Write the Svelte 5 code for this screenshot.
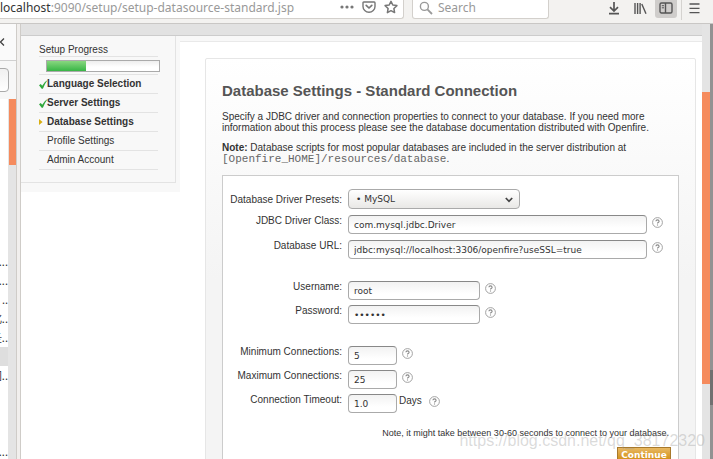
<script>
  const steps = [
    { name: 'Language Selection', state: 'done' },
    { name: 'Server Settings', state: 'done' },
    { name: 'Database Settings', state: 'current' },
    { name: 'Profile Settings', state: 'todo' },
    { name: 'Admin Account', state: 'todo' }
  ];
  const groups = [
    [
      { id: 'driver', label: 'JDBC Driver Class:', value: 'com.mysql.jdbc.Driver', size: 'wide' },
      { id: 'url', label: 'Database URL:', value: 'jdbc:mysql://localhost:3306/openfire?useSSL=true', size: 'wide' }
    ],
    [
      { id: 'username', label: 'Username:', value: 'root', size: 'medium' },
      { id: 'password', label: 'Password:', value: 'secret', size: 'medium', type: 'password' }
    ],
    [
      { id: 'min', label: 'Minimum Connections:', value: '5', size: 'small' },
      { id: 'max', label: 'Maximum Connections:', value: '25', size: 'small' },
      { id: 'timeout', label: 'Connection Timeout:', value: '1.0', size: 'small', unit: 'Days' }
    ]
  ];
  const bookmarks = ['...', '...', '..', '化..', '圣..', '', '间..', '', '', '', '...'];
</script>

{#snippet help()}
  <svg class="help" viewBox="0 0 11 11" role="img" aria-label="Help">
    <circle cx="5.5" cy="5.5" r="4.9" fill="#fff" stroke="#999" stroke-width="0.9" />
    <path d="M3.9 4.3Q4 2.9 5.5 2.9T7.1 4.2Q7.1 5 6.2 5.4Q5.5 5.7 5.5 6.5M5.5 7.4V8.4" fill="none" stroke="#888" stroke-width="1.1" />
  </svg>
{/snippet}

<div class="window">
  <header class="toolbar">
    <div class="address">
      <span class="location"><b>localhost</b>:9090/setup/setup-datasource-standard.jsp</span>
      <button aria-label="Page actions">
        <svg width="14" height="14" viewBox="0 0 14 14" fill="#777"><circle cx="2" cy="7" r="1.6" /><circle cx="7" cy="7" r="1.6" /><circle cx="12" cy="7" r="1.6" /></svg>
      </button>
      <button aria-label="Save to Pocket">
        <svg width="14" height="14" viewBox="0 0 14 14" fill="none" stroke="#777" stroke-width="1.4" stroke-linejoin="round" stroke-linecap="round"><path d="M1.8 2H12.2Q13 2 13 3V6.5A6 5.8 0 0 1 1 6.5V3Q1 2 1.8 2Z" /><path d="M4.2 5.4L7 8L9.8 5.4" stroke-width="1.7" /></svg>
      </button>
      <button aria-label="Bookmark this page">
        <svg width="14" height="14" viewBox="0 0 14 14" fill="none" stroke="#777" stroke-width="1.5" stroke-linejoin="round"><path d="M7 1.3L8.8 5L12.9 5.6L9.9 8.5L10.6 12.6L7 10.7L3.4 12.6L4.1 8.5L1.1 5.6L5.2 5Z" /></svg>
      </button>
    </div>
    <label class="search">
      <svg width="14" height="14" viewBox="0 0 14 14" fill="none" stroke="#999" stroke-width="1.4"><circle cx="5.4" cy="5.4" r="4" /><path d="M8.4 8.4L13 13" stroke-width="1.8" /></svg>
      <input type="search" placeholder="Search" aria-label="Search" />
    </label>
    <nav class="tools" aria-label="Browser tools">
      <button aria-label="Downloads">
        <svg width="12" height="14" viewBox="0 0 12 14" fill="none" stroke="#555" stroke-width="1.7"><path d="M6 1V10M2 6.2L6 10L10 6.2M1 12.6H11" /></svg>
      </button>
      <button aria-label="Library">
        <svg width="14" height="14" viewBox="0 0 14 14" fill="none" stroke="#555" stroke-width="1.4"><path d="M2 2V13M4.6 2V13M7.1 2V13M8.8 3L13 12.7" /></svg>
      </button>
      <button class="pressed" aria-label="Sidebars">
        <svg width="14" height="14" viewBox="0 0 14 14" fill="none" stroke="#555" stroke-width="1.4"><rect x="1" y="2" width="12" height="10" rx="1.5" /><path d="M6.5 2V12" /><path d="M2.8 4.7H5M2.8 6.8H5" stroke-width="1" /></svg>
      </button>
      <i class="divider"></i>
      <button aria-label="Menu">
        <svg width="11" height="12" viewBox="0 0 11 12" stroke="#555" stroke-width="1.3"><path d="M0.5 2H10.5M0.5 6.3H10.5M0.5 10.6H10.5" /></svg>
      </button>
    </nav>
  </header>

  <div class="body">
    <aside class="panel">
      <div class="panelhead">
        <svg width="6" height="8" viewBox="0 0 6 8" fill="none" stroke="#444" stroke-width="1.3"><path d="M4 0.5L0.5 4L4 7.5" /></svg>
      </div>
      <div class="panelsearch"><input aria-label="Search bookmarks" /></div>
      <div class="panelbody">
        <ul>
          {#each bookmarks as mark, i}
            <li class:selected={i === 5}><span>{mark}</span></li>
          {/each}
        </ul>
        <div class="track"><div class="thumb"></div></div>
      </div>
    </aside>
    <div class="splitter"></div>

    <div class="page">
      <div class="band"></div>
      <div class="columns">
        <div class="side">
          <nav class="steps">
            <h2>Setup Progress</h2>
            <div class="meter"><div class="progress"><div style="width: 35%"></div></div></div>
            <ul>
              {#each steps as step}
                <li class={step.state}>
                  <span class="mark">
                    {#if step.state === 'done'}
                      <svg width="9" height="9" viewBox="0 0 9 9"><path d="M0 5.2L1.8 4L3.2 5.7Q5.2 1.8 8.6 0Q5.6 4 3.9 8.8H2.7Z" fill="#2fa83c" /></svg>
                    {:else if step.state === 'current'}
                      <svg width="4" height="6" viewBox="0 0 4 6"><path d="M0 0L3.6 3L0 6Z" fill="#d8ae10" /></svg>
                    {/if}
                  </span>{step.name}
                </li>
              {/each}
            </ul>
          </nav>
        </div>

        <main>
          <section class="card">
            <h1>Database Settings - Standard Connection</h1>
            <p>Specify a JDBC driver and connection properties to connect to your database. If you need more information about this process please see the database documentation distributed with Openfire.</p>
            <p><b>Note:</b> Database scripts for most popular databases are included in the server distribution at <code>[Openfire_HOME]/resources/database</code>.</p>
            <form onsubmit={(e) => e.preventDefault()}>
              <div class="group">
                <div class="row preset">
                  <label for="preset">Database Driver Presets:</label>
                  <div class="selectbox">
                    <select id="preset"><option>• MySQL</option></select>
                    <svg width="8" height="6" viewBox="0 0 8 6" fill="none" stroke="#444" stroke-width="1.7"><path d="M0.8 1L4 4.3L7.2 1" /></svg>
                  </div>
                </div>
                {#each groups[0] as field}
                  {@render row(field)}
                {/each}
              </div>
              {#each groups.slice(1) as group}
                <div class="group">
                  {#each group as field}
                    {@render row(field)}
                  {/each}
                </div>
              {/each}
              <p class="hint">Note, it might take between 30-60 seconds to connect to your database.</p>
              <div class="actions"><button type="submit">Continue</button></div>
            </form>
          </section>
        </main>
      </div>
    </div>
    <div class="pagetrack"><div class="thumb"></div></div>
  </div>
  <div class="edge"><div></div></div>
  <div class="watermark">https://blog.csdn.net/qq_38172320</div>
</div>

{#snippet row(field)}
  <div class="row">
    <label for={field.id}>{field.label}</label>
    <input id={field.id} class={field.size} type={field.type ?? 'text'} value={field.value} />
    {#if field.unit}<span class="unit">{field.unit}</span>{/if}
    {@render help()}
  </div>
{/snippet}

<style>
  :global(body) { margin: 0; }
  * { box-sizing: border-box; }
  button { font: inherit; border: 0; padding: 0; background: none; display: flex; align-items: center; justify-content: center; }
  svg { display: block; flex: none; }
  ul { list-style: none; margin: 0; padding: 0; }

  .window { position: relative; display: flex; flex-direction: column; height: 100vh; overflow: hidden; background: #fff; color: #333; font: 10px/11px "Liberation Sans", Arial, sans-serif; }

  .toolbar { flex: none; display: flex; height: 24px; padding-bottom: 4px; background: #f3f2f0; border-bottom: 1px solid #c9c7c5; font-family: "Noto Sans", sans-serif; font-size: 12px; }
  .address { flex: 1; display: flex; gap: 8px; align-items: center; height: 19px; padding: 0 5px 4px 0; background: #fff; border: solid #d3d0cc; border-width: 0 1px 1px 0; border-radius: 0 0 3px 0; color: #999; }
  .location { flex: 1; white-space: nowrap; line-height: 15px; }
  .location b { font-weight: 400; color: #333; }
  .search { display: flex; align-items: center; gap: 5px; width: 137px; height: 19px; margin-left: 8px; padding: 0 6px 3px; background: #fff; border: solid #d3d0cc; border-width: 0 1px 1px; border-radius: 0 0 3px 3px; }
  .search input { width: 90px; border: 0; padding: 0; background: none; outline: 0; font: inherit; height: 15px; }
  .search input::placeholder { color: #999; opacity: 1; }
  .tools { display: flex; align-items: center; gap: 4px; width: 164px; height: 18px; padding: 0 11px 0 0; justify-content: flex-end; }
  .tools button { width: 22px; height: 18px; padding-bottom: 3px; }
  .tools .pressed { background: #cfcdcb; border-radius: 0 0 3px 3px; }
  .tools button:last-child { width: 16px; }
  .divider { width: 1px; height: 21px; background: #d5d3d0; }

  .body { flex: 1; display: flex; min-height: 0; padding-right: 3px; }
  .panel { flex: none; display: flex; flex-direction: column; width: 16px; background: #fff; overflow: hidden; }
  .panelhead { flex: none; height: 37px; padding-top: 14px; background: #fafafa; border-bottom: 1px solid #d0d0d0; }
  .panelsearch { flex: none; height: 38px; padding-top: 7px; background: #f7f7f7; }
  .panelsearch input { display: block; width: 29px; height: 24px; margin-left: -20px; border: 1px solid #aaa; border-radius: 4px; background: linear-gradient(#f0f0f0, #fff); }
  .panelbody { flex: 1; display: flex; }
  .panelbody ul { width: 9px; padding-top: 153px; border-right: 1px solid #e4e4e4; font: 11px/19px "Noto Sans CJK SC", sans-serif; }
  .panelbody li { display: flex; justify-content: flex-end; height: 19px; overflow: hidden; }
  .panelbody li span { flex: none; }
  .panelbody .selected { background: #dedede; }
  .track { flex: 1; background: #e4e4e4; }
  .track .thumb { height: 66px; background: #f58b5d; }
  .splitter { flex: none; width: 5px; background: #f1efed; border: solid #cfccc8; border-width: 0 1px; }

  .page { flex: 1; min-width: 0; overflow: hidden; background: #fff; }
  .band { height: 12px; background: #e2e2e2; border-bottom: 1px solid #ccc; }
  .columns { display: flex; background: linear-gradient(#f8f8f8 6px, #fff 6px); }
  .side { flex: none; width: 159px; height: 156px; padding-right: 4px; background: #f8f8f8; }
  .steps { height: 147px; padding: 8px 17px 0 18px; border: solid #e3e3e3; border-width: 0 1px 1px 0; }
  .steps h2 { margin: 0; height: 13px; font-size: 10px; font-weight: 400; line-height: 12px; border-bottom: 1px solid #e3e3e3; }
  .meter { height: 18px; padding: 3px 0 0 7px; border-bottom: 1px solid #e3e3e3; }
  .progress { width: 114px; height: 12px; border: 1px solid #aaa; background: linear-gradient(#eee, #fff 60%); }
  .progress div { height: 100%; background: linear-gradient(#89d780, #37b545); }
  .steps li { display: flex; align-items: center; height: 19px; border-bottom: 1px solid #e3e3e3; line-height: 18px; }
  .mark { width: 8px; height: 9px; display: flex; align-items: center; }
  .done, .current { font-weight: 700; }

  main { flex: 1; min-width: 0; margin-top: 5px; padding: 16px 6px 0 25px; border-top: 1px solid #e9e9e9; background: #fff; }
  .card { min-height: 420px; padding: 23px 16px 0; border: 1px solid #e6e6e6; border-radius: 2px; background: linear-gradient(#fff, #f4f4f4 220px); }
  h1 { margin: 0 0 11px; font-size: 15px; line-height: 18px; color: #555; }
  p { margin: 0 0 9px; }
  code { font: 11px/11px "Liberation Mono", monospace; color: #666; }
  form { margin-top: 10px; padding: 13px 7px 8px; border: 1px solid #ccc; background: #fff; }
  .group { display: flex; flex-direction: column; gap: 5px; margin-bottom: 22px; }
  .group:first-child { gap: 6px; }
  .group:nth-last-child(3) { margin-bottom: 15px; }
  .row { display: flex; align-items: flex-start; }
  .row label { flex: none; width: 112px; margin-right: 6px; text-align: right; white-space: nowrap; }
  .row.preset label { padding-top: 5px; }
  .selectbox { position: relative; width: 172px; }
  .selectbox svg { position: absolute; right: 7px; top: 8px; pointer-events: none; }
  select { appearance: none; display: block; width: 100%; height: 20px; padding: 0 7px; border: 1px solid #aaa; border-radius: 4px; background: linear-gradient(#fff, #e9e8e6); color: #333; font: 9px "DejaVu Sans", sans-serif; }
  .row input { height: 19px; padding: 1px 5px 0; border: 1px solid #aaa; border-top-color: #888; border-radius: 4px; background: linear-gradient(#f2f2f2, #fff 70%); color: #333; font: 9px "DejaVu Sans", sans-serif; }
  .wide { width: 299px; min-width: 0; }
  .medium { width: 132px; }
  .small { width: 49px; }
  .unit { padding: 1px 2px 0; }
  .help { width: 11px; height: 11px; margin: 2px 0 0 5px; }
  .hint { margin: 0 2px 8px; font-size: 9px; text-align: right; white-space: nowrap; }
  .actions { display: flex; justify-content: flex-end; }
  .actions button { width: 54px; height: 15px; border: 1px solid #a8792c; background: linear-gradient(#e8b863, #d08b0d); color: #fff; font: bold 9px "DejaVu Sans", sans-serif; }

  .pagetrack { flex: none; width: 8px; padding-top: 68px; background: #e4e4e4; }
  .pagetrack .thumb { height: 292px; background: #f58b5d; }
  .edge { position: absolute; right: 0; top: 24px; bottom: 0; width: 3px; padding-top: 346px; background: #929292; }
  .edge div { height: 35px; background: #707070; }
  .watermark { position: absolute; right: 8px; bottom: 9px; font-size: 16px; line-height: 18px; color: rgba(150, 150, 150, 0.35); pointer-events: none; }
</style>
